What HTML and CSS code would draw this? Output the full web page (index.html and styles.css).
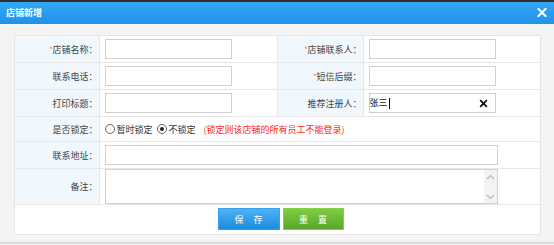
FILE: index.html
```html
<!DOCTYPE html>
<html lang="zh-CN">
<head>
<meta charset="utf-8">
<title>店铺新增</title>
<link rel="stylesheet" href="styles.css">
</head>
<body>
<div class="win">
  <div class="titlebar">
    <span class="title">店铺新增</span>
    <svg class="close" width="10" height="9" viewBox="0 0 10 9"><path d="M1.5 1 L8.5 8 M8.5 1 L1.5 8" stroke="#fff" stroke-width="2" stroke-linecap="square"/></svg>
  </div>
  <div class="body">
    <div class="panel">
      <table class="form">
        <colgroup><col class="c-l1"><col class="c-v1"><col class="c-l2"><col class="c-v2"></colgroup>
        <tr class="r1">
          <td class="lbl"><span class="req">*</span>店铺名称：</td>
          <td class="val"><input class="ipt" type="text"></td>
          <td class="lbl"><span class="req">*</span>店铺联系人：</td>
          <td class="val"><input class="ipt" type="text"></td>
        </tr>
        <tr class="r2">
          <td class="lbl">联系电话：</td>
          <td class="val"><input class="ipt" type="text"></td>
          <td class="lbl"><span class="req">*</span>短信后缀：</td>
          <td class="val"><input class="ipt" type="text"></td>
        </tr>
        <tr class="r3">
          <td class="lbl">打印标题：</td>
          <td class="val"><input class="ipt" type="text"></td>
          <td class="lbl">推荐注册人：</td>
          <td class="val">
            <div class="ipt field"><span class="ftext">张三</span><span class="caret"></span><span class="grow"></span>
              <svg class="clr" width="9" height="9" viewBox="0 0 9 9"><path d="M1.2 1.2 L7.8 7.8 M7.8 1.2 L1.2 7.8" stroke="#111" stroke-width="1.8"/></svg>
            </div>
          </td>
        </tr>
        <tr class="r4">
          <td class="lbl">是否锁定：</td>
          <td class="val" colspan="3">
            <div class="radios">
              <span class="radio"></span><span class="rtext">暂时锁定</span>
              <span class="radio on"></span><span class="rtext">不锁定</span>
              <span class="warn">(锁定则该店铺的所有员工不能登录)</span>
            </div>
          </td>
        </tr>
        <tr class="r5">
          <td class="lbl">联系地址：</td>
          <td class="val" colspan="3"><input class="ipt wide" type="text"></td>
        </tr>
        <tr class="r6">
          <td class="lbl">备注：</td>
          <td class="val" colspan="3">
            <div class="ta">
              <textarea class="tainner"></textarea>
              <div class="sbar">
                <svg width="9" height="6" viewBox="0 0 9 6"><path d="M1 5 L4.5 1.5 L8 5" fill="none" stroke="#b8b8b8" stroke-width="1.2"/></svg>
                <svg width="9" height="6" viewBox="0 0 9 6"><path d="M1 1 L4.5 4.5 L8 1" fill="none" stroke="#b8b8b8" stroke-width="1.2"/></svg>
              </div>
            </div>
          </td>
        </tr>
      </table>
      <div class="actions">
        <button class="btn save" type="button">保 存</button>
        <button class="btn reset" type="button">重 置</button>
      </div>
    </div>
  </div>
</div>
</body>
</html>
```
FILE: styles.css
```css
html, body {
  margin: 0;
  padding: 0;
  background: #e9e9e9;
}
body {
  font-family: "Noto Sans CJK SC", "Liberation Sans", sans-serif;
  font-size: 9px;
  color: #333;
}
.win {
  width: 554px;
  border-top: 2px solid #2e2e2e;
}
.titlebar {
  height: 22px;
  background: linear-gradient(#35a6f6, #1f93ea);
  display: flex;
  align-items: center;
  justify-content: space-between;
  padding: 0 7px 0 6px;
}
.title {
  color: #fff;
  font-size: 9px;
  font-weight: bold;
  line-height: 22px;
}
.close {
  display: block;
  margin-top: -1px;
}
.body {
  background: #f4f4f4;
  height: 207px;
  padding: 11px 13px 0 14px;
  border-bottom: 1px solid #d2d2d2;
}
.panel {
  width: 525px;
  background: #fff;
  border: 1px solid #e6e6e6;
}
.form {
  width: 525px;
  border-collapse: collapse;
  table-layout: fixed;
}
.c-l1 { width: 84px; }
.c-v1 { width: 178px; }
.c-l2 { width: 86px; }
.c-v2 { width: 177px; }
.form td {
  padding: 0;
  border-bottom: 1px solid #e8e8e8;
  border-right: 1px solid #e8e8e8;
  vertical-align: middle;
}
.form td:last-child { border-right: none; }
.r1 td { height: 26px; }
.r2 td { height: 26px; }
.r3 td { height: 26px; }
.r4 td { height: 24px; }
.r5 td { height: 26px; }
.r6 td { height: 35px; }
.lbl {
  background: #f0f7fd;
  text-align: right;
  padding-right: 1px !important;
  color: #444;
  white-space: nowrap;
}
.req {
  color: #ff5a1f;
  font-size: 7px;
  vertical-align: 1px;
}
.val {
  padding-left: 5px !important;
}
.ipt {
  display: block;
  box-sizing: border-box;
  width: 127px;
  height: 20px;
  margin: 0;
  border: 1px solid #d0d0d0;
  background: #fff;
  padding: 0 2px;
  font: inherit;
  outline: none;
}
.ipt.wide { width: 393px; }
.field {
  display: flex;
  align-items: center;
  padding: 0 7px 0 0;
  color: #111;
}
.ftext { line-height: 18px; }
.caret {
  width: 1px;
  height: 11px;
  background: #111;
  margin-left: 1px;
}
.grow { flex: 1; }
.clr { display: block; }
.radios {
  display: flex;
  align-items: center;
  height: 24px;
}
.radio {
  box-sizing: border-box;
  width: 10px;
  height: 10px;
  border: 1px solid #666;
  border-radius: 50%;
  background: #fff;
  position: relative;
  margin-right: 2px;
}
.radio.on::after {
  content: "";
  position: absolute;
  left: 2px;
  top: 2px;
  width: 4px;
  height: 4px;
  border-radius: 50%;
  background: #222;
}
.rtext {
  color: #333;
  margin-right: 4px;
}
.warn {
  color: #ff1e1e;
  margin-left: 4px;
}
.ta {
  box-sizing: border-box;
  width: 393px;
  height: 35px;
  border: 1px solid #d0d0d0;
  display: flex;
  background: #fff;
}
.tainner {
  flex: 1;
  border: none;
  resize: none;
  outline: none;
  margin: 0;
  padding: 1px 2px;
  font: inherit;
  overflow: hidden;
}
.sbar {
  width: 13px;
  background: #f3f3f3;
  display: flex;
  flex-direction: column;
  justify-content: space-between;
  align-items: center;
  padding: 4px 0 3px;
}
.sbar svg { display: block; }
.actions {
  display: flex;
  justify-content: center;
  gap: 3px;
  padding: 3px 0 4px 6px;
}
.btn {
  box-sizing: border-box;
  width: 62px;
  height: 22px;
  margin: 0;
  padding: 0;
  font-family: inherit;
  font-size: 9px;
  color: #fff;
  letter-spacing: 4px;
  text-indent: 4px;
  cursor: pointer;
}
.btn.save {
  background: linear-gradient(#4eb2f6, #1a8cdd);
  border: 1px solid #3aa0ea;
}
.btn.reset {
  width: 61px;
  background: linear-gradient(#7fcd3e, #5aa62d);
  border: 1px solid #86cf4f;
}
```
